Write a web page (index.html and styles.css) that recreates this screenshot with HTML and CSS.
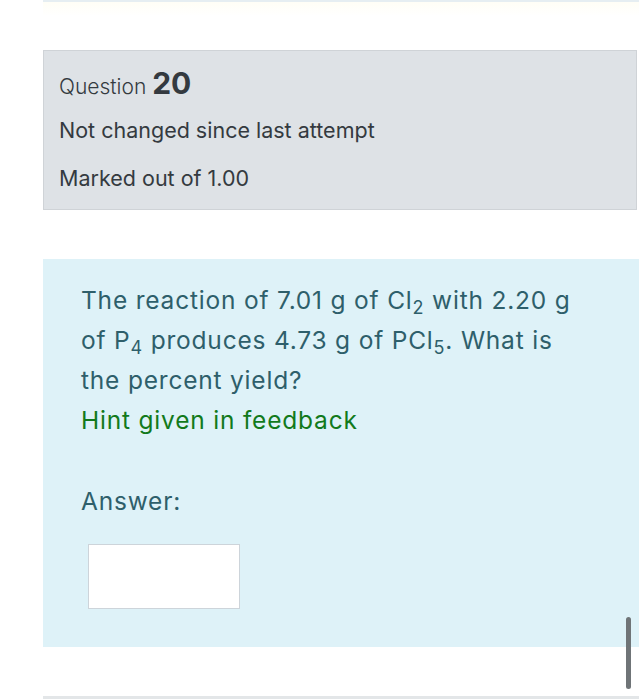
FILE: index.html
```html
<!DOCTYPE html>
<html>
<head>
<meta charset="utf-8">
<link rel="stylesheet" href="styles.css">
</head>
<body>
<div class="page">
  <div class="prev-end"></div>
  <div class="info">
    <h3 class="qno">Question <span class="num">20</span></h3>
    <div class="state">Not changed since last attempt</div>
    <div class="grade">Marked out of 1.00</div>
  </div>
  <div class="content">
    <div class="qtext">
      <p>The reaction of 7.01 g of Cl<sub>2</sub> with 2.20 g of P<sub>4</sub> produces 4.73 g of PCl<sub>5</sub>. What is the percent yield?<br><span class="hint">Hint given in feedback</span></p>
    </div>
    <div class="ablock">
      <label class="alabel">Answer:</label>
      <input class="answer" type="text">
    </div>
    <div class="scrollbar"></div>
  </div>
  <div class="next-start"></div>
</div>
</body>
</html>
```
FILE: styles.css
```css
html, body {
  margin: 0;
  padding: 0;
  background: #ffffff;
}
body {
  font-family: Inter, Roboto, "Noto Sans", sans-serif;
  color: #343a40;
  width: 639px;
  height: 700px;
  overflow: hidden;
}
.page {
  padding-left: 43px;
  display: flex;
  flex-direction: column;
}
.prev-end {
  height: 14px;
  border-top: 2px solid #e6eef2;
  background: linear-gradient(#fffef6, #ffffff);
  margin-bottom: 34px;
}
.info {
  background: #dee2e6;
  border: 1px solid #cfd3d7;
  margin-right: 2px;
  height: 160px;
  box-sizing: border-box;
  padding: 12px 15px 0;
}
.qno {
  margin: 0;
  font-weight: 300;
  font-size: 21px;
  line-height: 40px;
  color: #343a40;
}
.num {
  font-weight: 700;
  font-size: 30px;
}
.state {
  font-size: 21.5px;
  line-height: 26px;
  margin-top: 10px;
}
.grade {
  font-size: 21.5px;
  line-height: 26px;
  margin-top: 22px;
}
.content {
  position: relative;
  background: #def2f8;
  margin-top: 49px;
  height: 388px;
  padding: 21px 50px 0 38px;
  box-sizing: border-box;
  color: #2e5f6b;
}
.qtext {
  width: 505px;
}
.qtext p {
  margin: 0;
  font-size: 24.5px;
  letter-spacing: 0.8px;
  line-height: 40px;
}
sub {
  font-size: 18px;
  position: relative;
  top: 5px;
  vertical-align: baseline;
  line-height: 0;
}
.hint {
  color: #127a1c;
}
.ablock {
  margin-top: 41px;
  display: flex;
  flex-direction: column;
  align-items: flex-start;
}
.alabel {
  font-size: 24.5px;
  letter-spacing: 0.8px;
  line-height: 40px;
}
.answer {
  margin-top: 23px;
  margin-left: 7px;
  width: 152px;
  height: 65px;
  box-sizing: border-box;
  border: 1px solid #cdd4da;
  background: #ffffff;
  padding: 0;
}
.scrollbar {
  position: absolute;
  left: 583px;
  top: 358px;
  width: 5px;
  height: 72px;
  border-radius: 3px;
  background: #6f7477;
}
.next-start {
  margin-top: 49px;
  border-top: 3px solid #e3e6e8;
}
```
